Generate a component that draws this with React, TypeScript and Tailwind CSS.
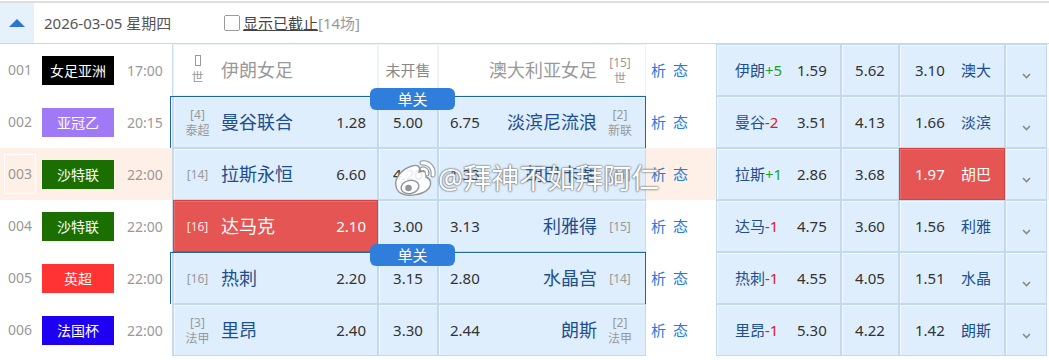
import React from "react";

type Match = {
  no: string;
  league: string;
  lc: string;
  time: string;
  hr: string[];
  home: string;
  ho: string;
  d: string;
  ao: string;
  away: string;
  ar: string[];
  rh: string;
  hcp: string;
  r1: string;
  r2: string;
  r3: string;
  ra: string;
  inactive?: boolean;
  selected?: boolean;
  hot?: boolean;
  homeRed?: boolean;
  rightRed?: boolean;
};

const rows: Match[] = [
  { no: "001", league: "女足亚洲", lc: "bg-[#000000]", time: "17:00", hr: ["□", "世"], home: "伊朗女足", ho: "", d: "未开售", ao: "", away: "澳大利亚女足", ar: ["[15]", "世"], rh: "伊朗", hcp: "+5", r1: "1.59", r2: "5.62", r3: "3.10", ra: "澳大", inactive: true },
  { no: "002", league: "亚冠乙", lc: "bg-[#a07af6]", time: "20:15", hr: ["[4]", "泰超"], home: "曼谷联合", ho: "1.28", d: "5.00", ao: "6.75", away: "淡滨尼流浪", ar: ["[2]", "新联"], rh: "曼谷", hcp: "-2", r1: "3.51", r2: "4.13", r3: "1.66", ra: "淡滨", selected: true },
  { no: "003", league: "沙特联", lc: "bg-[#1a6f00]", time: "22:00", hr: ["[14]"], home: "拉斯永恒", ho: "6.60", d: "4.20", ao: "1.33", away: "胡巴卡塞", ar: ["[11]"], rh: "拉斯", hcp: "+1", r1: "2.86", r2: "3.68", r3: "1.97", ra: "胡巴", hot: true, rightRed: true },
  { no: "004", league: "沙特联", lc: "bg-[#1a6f00]", time: "22:00", hr: ["[16]"], home: "达马克", ho: "2.10", d: "3.00", ao: "3.13", away: "利雅得", ar: ["[15]"], rh: "达马", hcp: "-1", r1: "4.75", r2: "3.60", r3: "1.56", ra: "利雅", homeRed: true },
  { no: "005", league: "英超", lc: "bg-[#ff3333]", time: "22:00", hr: ["[16]"], home: "热刺", ho: "2.20", d: "3.15", ao: "2.80", away: "水晶宫", ar: ["[14]"], rh: "热刺", hcp: "-1", r1: "4.55", r2: "4.05", r3: "1.51", ra: "水晶", selected: true },
  { no: "006", league: "法国杯", lc: "bg-[#1e00f2]", time: "22:00", hr: ["[3]", "法甲"], home: "里昂", ho: "2.40", d: "3.30", ao: "2.44", away: "朗斯", ar: ["[2]", "法甲"], rh: "里昂", hcp: "-1", r1: "5.30", r2: "4.22", r3: "1.42", ra: "朗斯" },
];

const blue = "bg-[#deeefd] border border-[#c3d8f1] shadow-[inset_1px_1px_0_#f3f9ff]";
const white = "bg-white border border-[#edf3fa]";
const red = "bg-[#e45553] border border-[#d04543] shadow-[inset_1px_1px_0_#ec6c6a]";

function Rank({ lines, light }: { lines: string[]; light?: boolean }) {
  return (
    <div className={`flex flex-col items-center justify-center text-[12px] leading-[15px] ${light ? "text-[#ffe4e3]" : "text-[#999999]"}`}>
      {lines.map((l, i) =>
        l === "□" ? (
          <span key={i} className="inline-block w-[6px] h-[11px] border border-[#999999] mb-[3px]" />
        ) : (
          <span key={i} className={i === 1 ? "mt-[1px]" : ""}>{l}</span>
        )
      )}
    </div>
  );
}

function Chevron() {
  return (
    <svg width="9" height="6" viewBox="0 0 9 6">
      <path d="M1 1 L4.5 4.5 L8 1" fill="none" stroke="#8a8a8a" strokeWidth="1.6" />
    </svg>
  );
}

function Row({ m }: { m: Match }) {
  const rowBg = m.hot ? "bg-[#fef0e6]" : "bg-white";
  const cell = m.inactive ? white : blue;
  const homeCell = m.homeRed ? red : cell;
  const teamColor = m.inactive ? "text-[#999999]" : m.homeRed ? "text-white" : "text-[#1d4f8e]";
  const oddsColor = "text-[#333333]";
  return (
    <div className={`relative h-[52px] flex ${rowBg}`}>
      <div className="w-[172px] h-full flex items-center text-[14px] text-[#999999]">
        <div className="w-[42px]">
          <span className={`ml-[4px] inline-block px-[3px] py-[9px] leading-[20px] border ${m.hot ? "border-white" : "border-transparent"}`}>{m.no}</span>
        </div>
        <div className={`w-[72px] h-[29px] flex items-center justify-center text-white text-[14px] ${m.lc}`}>{m.league}</div>
        <div className="ml-[13px]">{m.time}</div>
      </div>
      <div className="w-[474px] h-full flex border-l border-[#c6daf2]">
        <div className={`w-[205px] h-full flex items-center ${homeCell}`}>
          <div className="w-[47px]">
            <Rank lines={m.hr} light={m.homeRed} />
          </div>
          <div className={`flex-1 text-[18px] ${teamColor}`}>{m.home}</div>
          <div className={`pr-[11px] text-[15px] ${m.homeRed ? "text-white" : oddsColor}`}>{m.ho}</div>
        </div>
        <div className={`w-[60px] h-full flex items-center justify-center text-[15px] ${cell} ${m.inactive ? "text-[#888888]" : oddsColor}`}>{m.d}</div>
        <div className={`w-[208px] h-full flex items-center ${cell}`}>
          <div className={`pl-[11px] text-[15px] ${oddsColor}`}>{m.ao}</div>
          <div className={`flex-1 text-right text-[18px] ${m.inactive ? "text-[#999999]" : "text-[#1d4f8e]"}`}>{m.away}</div>
          <div className="w-[46px] mr-[2px]">
            <Rank lines={m.ar} />
          </div>
        </div>
      </div>
      <div className="w-[70px] h-full flex items-center pl-[5px] gap-[7px] text-[15px] text-[#2a7bd8]">
        <span>析</span>
        <span>态</span>
      </div>
      <div className="w-[331px] h-full flex text-[15px]">
        <div className={`w-[125px] h-full flex items-center pl-[18px] ${blue}`}>
          <div className="w-[62px] text-[#1d4f8e]">
            {m.rh}
            <span className={m.hcp.startsWith("+") ? "text-[#1ea01e]" : "text-[#e8161e]"}>{m.hcp}</span>
          </div>
          <div className={oddsColor}>{m.r1}</div>
        </div>
        <div className={`w-[58px] h-full flex items-center justify-center ${oddsColor} ${blue}`}>{m.r2}</div>
        <div className={`w-[106px] h-full flex items-center pl-[15px] ${m.rightRed ? red : blue}`}>
          <div className={`w-[46px] ${m.rightRed ? "text-white" : oddsColor}`}>{m.r3}</div>
          <div className={m.rightRed ? "text-white" : "text-[#1d4f8e]"}>{m.ra}</div>
        </div>
        <div className={`w-[42px] h-full flex items-end justify-center pb-[16px] ${blue}`}>
          <Chevron />
        </div>
      </div>
      {m.selected && (
        <>
          <div className="absolute left-[170px] top-0 w-[476px] h-[53px] border border-[#1c63b4] pointer-events-none" />
          <div className="absolute left-[370px] top-[-8px] w-[85px] h-[22px] rounded-[6px] bg-[#2f7edb] text-white text-[15px] leading-[22px] text-center">单关</div>
        </>
      )}
    </div>
  );
}

function Watermark() {
  return (
    <div className="absolute left-[392px] top-[158px] flex items-center pointer-events-none opacity-90">
      <svg width="46" height="40" viewBox="0 0 46 40">
        <g fill="none" stroke="#8c8c8c" strokeWidth="1.4">
          <path d="M4 28 C2 20 10 11 20 8 C26 6 29 9 27 14 C32 12 36 14 34 19 C39 21 40 26 37 30 C32 37 14 40 7 34 C5 32 4 30 4 28 Z" fill="#ffffff" />
          <ellipse cx="18" cy="29" rx="9" ry="6.5" transform="rotate(-12 18 29)" fill="#ffffff" />
          <circle cx="16.5" cy="30" r="2.6" fill="#8c8c8c" />
          <path d="M30 5 C37 4 42 10 41 17" strokeWidth="5" stroke="#8c8c8c" strokeLinecap="round" />
          <path d="M30 5 C37 4 42 10 41 17" strokeWidth="3" stroke="#ffffff" strokeLinecap="round" />
          <path d="M30 11 C33 10 36 13 35 16" strokeWidth="4.5" stroke="#8c8c8c" strokeLinecap="round" />
          <path d="M30 11 C33 10 36 13 35 16" strokeWidth="2.5" stroke="#ffffff" strokeLinecap="round" />
        </g>
      </svg>
      <span className="ml-[0px] text-[28px] leading-[36px] text-white [text-shadow:0_0_1px_#555,0_0_2px_#777,0_0_2px_#777]">@拜神不如拜阿仁</span>
    </div>
  );
}

export default function App() {
  return (
    <div className="relative w-[1049px] h-[360px] bg-white overflow-hidden font-['Noto_Sans','Noto_Sans_CJK_SC',sans-serif]">
      <div className="mt-[1px] h-[2px] bg-[#dedede]" />
      <div className="h-[41px] flex items-center border-b border-[#c4d8f1]">
        <div className="w-[34px] h-full bg-[#e6f1fc] flex items-center justify-center">
          <div className="w-0 h-0 border-l-[8px] border-r-[8px] border-b-[8px] border-l-transparent border-r-transparent border-b-[#2a77d4]" />
        </div>
        <div className="w-[190px] pl-[10px] text-[15px] text-[#555555]">2026-03-05 星期四</div>
        <div className="w-[16px] h-[16px] border border-[#9a9a9a] rounded-[2px] bg-white" />
        <span className="ml-[3px] text-[15px] text-[#444444] underline">显示已截止</span>
        <span className="text-[15px] text-[#999999]">[14场]</span>
      </div>
      {rows.map((m) => (
        <Row key={m.no} m={m} />
      ))}
      <Watermark />
    </div>
  );
}
